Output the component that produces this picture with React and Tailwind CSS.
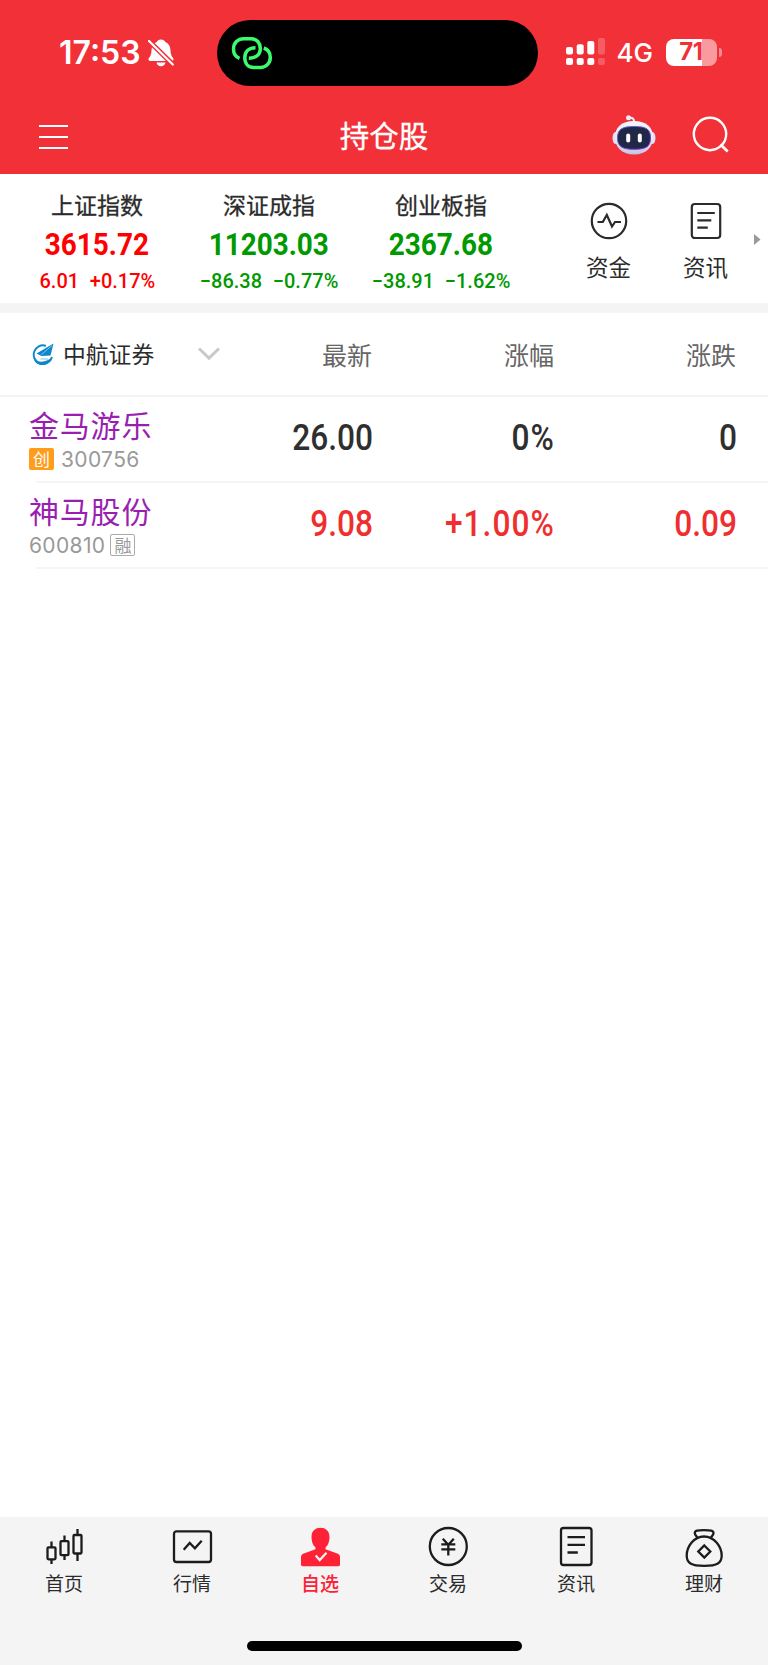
import React, { useState } from "react";

const indices = [
  { name: "上证指数", value: "3615.72", diff: "6.01", pct: "+0.17%", up: true },
  { name: "深证成指", value: "11203.03", diff: "−86.38", pct: "−0.77%", up: false },
  { name: "创业板指", value: "2367.68", diff: "−38.91", pct: "−1.62%", up: false },
];

const stocks = [
  { name: "金马游乐", code: "300756", tag: "创", price: "26.00", pct: "0%", change: "0", up: false },
  { name: "神马股份", code: "600810", tag: "融", price: "9.08", pct: "+1.00%", change: "0.09", up: true },
];

const BellOffIcon = () => (
  <svg width="26" height="28" viewBox="0 0 26 28" className="ml-[7px]">
    <path
      d="M13 .5c2.100 0 3.700 1 4.300 2.600 3.400 1.500 5 4.300 5.200 8.300.2 3.600.8 5.400 2.600 7.500.9 1.100.4 3.200-1.700 3.200H2.600C.5 22.100 0 20 .9 18.900c1.800-2.100 2.400-3.900 2.600-7.500.2-4 1.800-6.800 5.200-8.300C9.300 1.500 10.900.5 13 .5z"
      fill="#fff"
    />
    <path d="M8.500 23.500h9c-.4 2.200-2.200 3.700-4.500 3.700s-4.100-1.500-4.500-3.700z" fill="#fff" />
    <path d="M0 1L26 26.500" stroke="#f23038" strokeWidth="5" />
    <path d="M1 2L24.800 25.500" stroke="#fff" strokeWidth="2.200" strokeLinecap="round" />
  </svg>
);

const LinkIcon = () => (
  <svg width="42" height="34" viewBox="0 0 42 34" fill="none" stroke="#3bfc6c" strokeWidth="3.500">
    <path d="M8.500 22.300C4.700 20.900 2.500 17.300 2.500 13 2.500 7 7 2.700 12.500 2.700h7.800c5.400 0 9 4.300 9 9.800 0 5.800-4 9.700-11.500 9.700" />
    <path d="M24.500 11.700c-6.300 0-10.700 3.800-10.700 10 0 5.800 3.500 9.800 9 9.800h6.500c5.600 0 10-4.300 10-10.100 0-4.400-2.400-8-6.500-9.400" />
  </svg>
);

const SignalIcon = () => (
  <svg width="40" height="28" viewBox="0 0 40 28" fill="#fff">
    <rect x="0" y="9" width="7" height="7.500" rx="2" />
    <rect x="10.700" y="6.300" width="7" height="10.200" rx="2" />
    <rect x="21.300" y="3" width="7" height="13.500" rx="2" />
    <rect x="32" y="0" width="7" height="16.500" rx="2" opacity=".22" />
    <rect x="0" y="20" width="7" height="7" rx="2" />
    <rect x="10.700" y="20" width="7" height="7" rx="2" />
    <rect x="21.300" y="20" width="7" height="7" rx="2" />
    <rect x="32" y="20" width="7" height="7" rx="2" opacity=".22" />
  </svg>
);

const RobotIcon = () => (
  <svg width="44" height="40" viewBox="0 0 44 40">
    <defs>
      <linearGradient id="shell" x1="0" y1="0" x2="0" y2="1">
        <stop offset="0" stopColor="#f4f6fb" />
        <stop offset=".65" stopColor="#e2e4f4" />
        <stop offset="1" stopColor="#c4c2e4" />
      </linearGradient>
      <linearGradient id="rim" x1="0" y1="0" x2="1" y2="1">
        <stop offset="0" stopColor="#5a6fb4" />
        <stop offset="1" stopColor="#8a2be2" />
      </linearGradient>
    </defs>
    <path d="M16.500 3c3.800-.8 5.700.4 5.700 4.500" fill="none" stroke="#e6ecf8" strokeWidth="2" />
    <circle cx="16.500" cy="2.700" r="2.500" fill="#e6ecf8" />
    <ellipse cx="3.500" cy="23" rx="3" ry="6" fill="#dfe2f3" />
    <ellipse cx="40.500" cy="23" rx="3" ry="6" fill="#dfe2f3" />
    <path d="M22 6c12.500 0 19 6.500 19 16S35 39.500 22 39.500 3 31.500 3 22 9.500 6 22 6z" fill="url(#shell)" />
    <path
      d="M22 11.500c12.500 0 16.500 2.700 16.500 11.500S34 34.300 22 34.300 5.500 31.500 5.500 23 9.500 11.500 22 11.500z"
      fill="#202848"
      stroke="url(#rim)"
      strokeWidth="1"
    />
    <rect x="14.200" y="18.500" width="4" height="9" rx="2" fill="#fff" />
    <rect x="25.800" y="18.500" width="4" height="9" rx="2" fill="#fff" />
  </svg>
);

const SearchIcon = () => (
  <svg width="38" height="38" viewBox="0 0 38 38" fill="none" stroke="#fff" strokeWidth="2.400">
    <circle cx="18" cy="18" r="16.200" />
    <path d="M28.500 28.500l7.200 7" strokeWidth="2.800" />
  </svg>
);

const FundIcon = () => (
  <svg width="38" height="38" viewBox="0 0 38 38" fill="none" stroke="#2b2b2b" strokeWidth="2.200">
    <circle cx="19" cy="19" r="17.200" />
    <path d="M7.500 20h5.300l4-7 5.200 11.500 3-4.500h6" />
  </svg>
);

const NewsIcon = () => (
  <svg width="32" height="38" viewBox="0 0 32 38" fill="none" stroke="#2b2b2b" strokeWidth="2.200">
    <rect x="1.800" y="2" width="28.400" height="34" rx="3" />
    <path d="M7.300 11h17.500M7.300 18.300h14M7.300 25.600h10.500" />
  </svg>
);

const BrokerLogo = () => (
  <svg width="22" height="23" viewBox="0 0 22 23">
    <path d="M14 2.800A9.300 9.300 0 1 0 20 14" fill="none" stroke="#0d86ce" strokeWidth="1.900" />
    <path d="M1.500 15c3 4.500 12.300 5.500 18.700-1-1.500 6.500-8 9.500-13.200 7.500-3.100-1.200-5-3.200-5.500-6.500z" fill="#0d86ce" />
    <path d="M21.500.5L4.500 10.500l5 2.500 9-.5z" fill="#0d86ce" />
    <path d="M20 2.500L9.500 11.500" stroke="#fff" strokeWidth=".5" />
    <path d="M8.500 16h7.500" stroke="#b5dcf2" strokeWidth="1.800" />
  </svg>
);

const navStroke = { width: 40, height: 40, viewBox: "0 0 40 40", fill: "none", stroke: "#1c1c1c", strokeWidth: 2.3 };

const tabs = [
  {
    label: "首页",
    icon: (
      <svg {...navStroke}>
        <rect x="3.500" y="17.300" width="8" height="12" rx="1" />
        <path d="M7.500 11.500v5.800M7.500 29.300V34" />
        <rect x="16.500" y="11.200" width="8" height="14" rx="1" />
        <path d="M20.500 5.500v5.700M20.500 25.200V30" />
        <rect x="29.500" y="5" width="8" height="18.500" rx="1" />
        <path d="M33.500-1v6M33.500 23.500V31" />
      </svg>
    ),
  },
  {
    label: "行情",
    icon: (
      <svg {...navStroke}>
        <rect x="2" y="1.300" width="37" height="30.700" rx="2.500" />
        <path d="M11.700 19.800l6-6.800 5.200 5.300 6.800-7.500" />
      </svg>
    ),
  },
  {
    label: "自选",
    icon: (
      <svg width="40" height="40" viewBox="0 0 40 40">
        <path
          d="M20.500-2.300c5.400 0 9 3.400 9 9.300 0 4.300-1.200 8-4 10.500v1.800l11.700 4.100c2 .7 2.800 1.800 2.800 3.600v7.500c0 1-.6 1.700-1.700 1.700H2.700C1.600 36.200 1 35.500 1 34.500V27c0-1.800.8-2.900 2.800-3.600l11.700-4.100v-1.800c-2.800-2.500-4-6.200-4-10.500 0-5.900 3.600-9.300 9-9.300z"
          fill="#fd2236"
        />
        <path d="M15.700 25.600l4 4.500 6.800-7.300" fill="none" stroke="#f4f4f4" strokeWidth="2.200" />
      </svg>
    ),
  },
  {
    label: "交易",
    icon: (
      <svg {...navStroke}>
        <circle cx="20.300" cy="16.500" r="18.500" />
        <path d="M14.800 8.800l5.500 6 5.500-6M13.300 14.300h14M13.300 19.300h14M20.300 14.500v11" />
      </svg>
    ),
  },
  {
    label: "资讯",
    icon: (
      <svg {...navStroke}>
        <rect x="5" y="-2" width="30.500" height="37" rx="2.500" />
        <path d="M11.500 7.200H29M11.500 14.800H29M11.500 22.500h10.300" />
      </svg>
    ),
  },
  {
    label: "理财",
    icon: (
      <svg {...navStroke}>
        <path d="M13.500 7.800c-1-1.500-2.500-3-2.700-4.500C10.500.5 14 .1 20 .1s9.800.4 9.500 3.200c-.2 1.500-1.700 3-2.700 4.500" />
        <path d="M20 6.500C9.500 6.500 2.700 17 2.700 25.500c0 7.500 4.300 10.300 17.500 10.300s17.500-2.800 17.500-10.300C37.700 17 30.500 6.500 20 6.500z" />
        <path d="M20.300 15.500l6 6-6 6-6-6z" />
      </svg>
    ),
  },
];

const StatusBar = () => (
  <div className="flex h-[99px] items-start">
    <div className="mt-5 flex h-[66px] w-[216.5px] flex-none items-center pl-[59px]">
      <span className="font-['Inter'] text-[32px] font-semibold leading-none text-white">17:53</span>
      <BellOffIcon />
    </div>
    <div className="mt-5 flex h-[66px] w-[321px] flex-none items-center rounded-full bg-black pl-[14.5px]">
      <LinkIcon />
    </div>
    <div className="mt-[38px] flex h-[28px] items-center pl-[28px]">
      <SignalIcon />
      <span className="ml-[11px] w-[49px] pt-[2px] font-['Inter'] text-[26px] font-medium leading-none text-white">4G</span>
      <div className="flex h-[27px] w-[51px] items-center justify-center rounded-[8px] bg-[linear-gradient(90deg,#fff_71%,#f99a9e_71%)] font-['Inter'] text-[24px] font-bold leading-none tracking-[-0.5px] text-[#f23038]">
        71
      </div>
      <div className="ml-[2px] h-[9px] w-[3px] rounded-r-full bg-[#f98e92]" />
    </div>
  </div>
);

const Header = () => (
  <div className="flex h-[75px] items-center">
    <div className="flex w-[256px] flex-col gap-[9px] pl-[39px]">
      <span className="h-[2px] w-[29px] bg-white" />
      <span className="h-[2px] w-[29px] bg-white" />
      <span className="h-[2px] w-[29px] bg-white" />
    </div>
    <h1 className="w-[256px] pb-[4px] text-center text-[29.5px] leading-none text-white [-webkit-text-stroke:0.3px]">持仓股</h1>
    <div className="flex w-[256px] items-center pb-[3px] pl-[100px]">
      <RobotIcon />
      <div className="ml-[36px]">
        <SearchIcon />
      </div>
    </div>
  </div>
);

const IndexStrip = () => (
  <div className="flex h-[129px] flex-none pl-[11px]">
    {indices.map((it) => (
      <div key={it.name} className="flex w-[172px] flex-col items-center pt-[18px]">
        <span className="text-[23px] leading-[24px] text-[#2b2b2b] [-webkit-text-stroke:0.3px]">{it.name}</span>
        <span
          className={`mt-[11px] scale-x-[0.9] font-['Roboto'] text-[31px] font-bold leading-[36px] ${
            it.up ? "text-[#ff0000]" : "text-[#009900]"
          }`}
        >
          {it.value}
        </span>
        <span
          className={`mt-[6px] flex scale-x-[0.975] gap-[11px] whitespace-nowrap font-['Roboto'] text-[20.5px] font-medium leading-[24px] ${
            it.up ? "text-[#ff0000]" : "text-[#009900]"
          }`}
        >
          <span>{it.diff}</span>
          <span>{it.pct}</span>
        </span>
      </div>
    ))}
    <div className="ml-[33px] flex w-[97px] flex-col items-center pt-7">
      <FundIcon />
      <span className="mt-[14px] text-[22.500px] leading-[24px] text-[#2b2b2b]">资金</span>
    </div>
    <div className="flex w-[97px] flex-col items-center pt-7">
      <NewsIcon />
      <span className="mt-[14px] text-[22.500px] leading-[24px] text-[#2b2b2b]">资讯</span>
    </div>
    <svg width="7" height="11" viewBox="0 0 7 11" className="mt-[60px]">
      <path d="M0 0l6.500 5.500L0 11z" fill="#999" />
    </svg>
  </div>
);

const TableHead = () => (
  <div className="flex h-[84px] flex-none items-center border-b-2 border-[#f3f3f3] pl-8 pr-8">
    <button className="flex flex-none items-center">
      <BrokerLogo />
      <span className="ml-[9px] w-[134px] text-left text-[22.800px] leading-[26px] text-[#2b2b2b]">中航证券</span>
      <svg width="24" height="16" viewBox="0 0 24 16" fill="none" stroke="#c9c9c9" strokeWidth="3">
        <path d="M2 2.500l10 9.700 10-9.700" />
      </svg>
    </button>
    <span className="flex-1 text-right text-[25px] leading-[26px] text-[#666]">最新</span>
    <span className="w-[182px] text-right text-[25px] leading-[26px] text-[#666]">涨幅</span>
    <span className="w-[182px] text-right text-[25px] leading-[26px] text-[#666]">涨跌</span>
  </div>
);

const Num = ({ up, className, children }) => (
  <span
    className={`origin-right scale-x-[0.88] pb-[3px] text-right font-['Roboto'] text-[36px] font-medium leading-none ${
      up ? "text-[#ef2f2f]" : "text-[#2f2f2f]"
    } ${className}`}
  >
    {children}
  </span>
);

const StockRow = ({ stock }) => (
  <div>
    <div className="flex h-[84px] pl-[29px] pr-[31px]">
      <div className="flex w-[190px] flex-none flex-col pt-[11px]">
        <span className="text-[30px] leading-[32px] tracking-[0.8px] text-[#9a1fb1]">{stock.name}</span>
        <div className="mt-[7px] flex h-[24px] items-center">
          {stock.tag === "创" && (
            <span className="mr-[7px] flex h-[22px] w-[25px] items-center justify-center rounded-[2px] bg-[#ff9c1c] pb-px text-[17px] leading-none text-white">
              {stock.tag}
            </span>
          )}
          <span className="font-['Inter'] text-[21px] leading-none tracking-[0.35px] text-[#999]">{stock.code}</span>
          {stock.tag === "融" && (
            <span className="ml-[5px] flex h-[22px] w-[25px] items-center justify-center rounded-[2px] border border-[#aaa] pb-px text-[17px] leading-none text-[#999]">
              {stock.tag}
            </span>
          )}
        </div>
      </div>
      <div className="flex flex-1 items-center">
        <Num up={stock.up} className="flex-1">{stock.price}</Num>
        <Num up={stock.up} className="w-[182px] tracking-[1.2px]">{stock.pct}</Num>
        <Num up={stock.up} className="w-[182px]">{stock.change}</Num>
      </div>
    </div>
    <div className="ml-9 h-[2px] bg-[#f5f5f5]" />
  </div>
);

const App = () => {
  const [active, setActive] = useState(2);

  return (
    <div className="flex h-[1665px] w-[768px] flex-col overflow-hidden bg-white font-['Noto_Sans_CJK_SC',sans-serif]">
      <div className="h-[174px] flex-none bg-[#f23038]">
        <StatusBar />
        <Header />
      </div>
      <IndexStrip />
      <div className="h-[10px] flex-none bg-[#f4f4f4]" />
      <TableHead />
      {stocks.map((stock) => (
        <StockRow key={stock.code} stock={stock} />
      ))}
      <div className="mt-auto h-[148px] flex-none bg-[#f4f4f4]">
        <div className="flex h-[124px]">
          {tabs.map((tab, i) => (
            <button
              key={i}
              onClick={() => setActive(i)}
              className="flex w-[128px] flex-col items-center pt-[13px] [&_svg]:overflow-visible"
            >
              {tab.icon}
              <span
                className={`mt-px text-[19px] leading-[24px] ${
                  i === active ? "font-medium text-[#fd2236]" : "text-[#2b2b2b]"
                }`}
              >
                {tab.label}
              </span>
            </button>
          ))}
        </div>
        <div className="mx-auto h-[10px] w-[275px] rounded-full bg-black" />
      </div>
    </div>
  );
};

export default App;
